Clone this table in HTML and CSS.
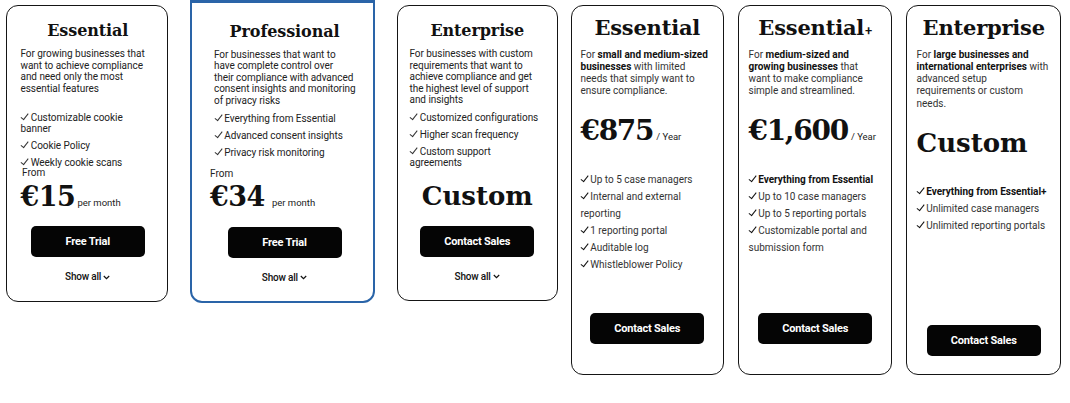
FILE: index.html
```html
<!DOCTYPE html>
<html lang="en">
<head>
<meta charset="utf-8">
<title>Pricing</title>
<link rel="stylesheet" href="styles.css">
</head>
<body>
<div class="page">
  <div class="group group-trial">
    <div class="card card-essential">
      <h2 class="title">Essential</h2>
      <p class="desc">For growing businesses that<br>want to achieve compliance<br>and need only the most<br>essential features</p>
      <ul class="features">
        <li>Customizable cookie<br>banner</li>
        <li>Cookie Policy</li>
        <li>Weekly cookie scans</li>
      </ul>
      <div class="from">From</div>
      <div class="price"><span class="amount">€15</span><span class="unit">per month</span></div>
      <a class="btn">Free Trial</a>
      <div class="show">Show all <svg width="7" height="5" viewBox="0 0 7 5"><path d="M0.8 1l2.7 2.7L6.2 1" fill="none" stroke="#111" stroke-width="1.2"/></svg></div>
    </div>
    <div class="card card-pro">
      <h2 class="title">Professional</h2>
      <p class="desc">For businesses that want to<br>have complete control over<br>their compliance with advanced<br>consent insights and monitoring<br>of privacy risks</p>
      <ul class="features">
        <li>Everything from Essential</li>
        <li>Advanced consent insights</li>
        <li>Privacy risk monitoring</li>
      </ul>
      <div class="from">From</div>
      <div class="price"><span class="amount">€34</span><span class="unit unit-wide">per month</span></div>
      <a class="btn">Free Trial</a>
      <div class="show">Show all <svg width="7" height="5" viewBox="0 0 7 5"><path d="M0.8 1l2.7 2.7L6.2 1" fill="none" stroke="#111" stroke-width="1.2"/></svg></div>
    </div>
    <div class="card card-ent">
      <h2 class="title">Enterprise</h2>
      <p class="desc">For businesses with custom<br>requirements that want to<br>achieve compliance and get<br>the highest level of support<br>and insights</p>
      <ul class="features">
        <li>Customized configurations</li>
        <li>Higher scan frequency</li>
        <li>Custom support<br>agreements</li>
      </ul>
      <div class="custom">Custom</div>
      <a class="btn">Contact Sales</a>
      <div class="show">Show all <svg width="7" height="5" viewBox="0 0 7 5"><path d="M0.8 1l2.7 2.7L6.2 1" fill="none" stroke="#111" stroke-width="1.2"/></svg></div>
    </div>
  </div>
  <div class="group group-sales">
    <div class="card wcard w1">
      <h2 class="wtitle">Essential</h2>
      <p class="wdesc">For <b>small and medium-sized<br>businesses</b> with limited<br>needs that simply want to<br>ensure compliance.</p>
      <div class="wprice"><span class="amount">€875</span><span class="unit">/ Year</span></div>
      <ul class="wfeatures">
        <li>Up to 5 case managers</li>
        <li>Internal and external<br>reporting</li>
        <li>1 reporting portal</li>
        <li>Auditable log</li>
        <li>Whistleblower Policy</li>
      </ul>
      <a class="btn">Contact Sales</a>
    </div>
    <div class="card wcard w2">
      <h2 class="wtitle">Essential<span class="plus">+</span></h2>
      <p class="wdesc">For <b>medium-sized and<br>growing businesses</b> that<br>want to make compliance<br>simple and streamlined.</p>
      <div class="wprice"><span class="amount">€1,600</span><span class="unit">/ Year</span></div>
      <ul class="wfeatures">
        <li class="strong">Everything from Essential</li>
        <li>Up to 10 case managers</li>
        <li>Up to 5 reporting portals</li>
        <li>Customizable portal and<br>submission form</li>
      </ul>
      <a class="btn">Contact Sales</a>
    </div>
    <div class="card wcard w3">
      <h2 class="wtitle">Enterprise</h2>
      <p class="wdesc">For <b>large businesses and<br>international enterprises</b> with<br>advanced setup<br>requirements or custom<br>needs.</p>
      <div class="wcustom">Custom</div>
      <ul class="wfeatures">
        <li class="strong">Everything from Essential+</li>
        <li>Unlimited case managers</li>
        <li>Unlimited reporting portals</li>
      </ul>
      <a class="btn">Contact Sales</a>
    </div>
  </div>
</div>
</body>
</html>
```
FILE: styles.css
```css
* { box-sizing: border-box; }
html, body { margin: 0; padding: 0; background: #fff; }
body {
  font-family: Roboto, "Noto Sans", sans-serif;
  color: #222;
  width: 1070px;
  height: 403px;
  overflow: hidden;
}
.page {
  display: flex;
  align-items: flex-start;
  gap: 13px;
  padding: 5px 0 0 6px;
}
.group { display: flex; }
.group-trial { gap: 22px; align-items: flex-start; }
.group-sales { gap: 14px; align-items: stretch; }

.card {
  display: flex;
  flex-direction: column;
  background: #fff;
  border: 1.5px solid #151515;
  border-radius: 12px;
}
.card-essential { width: 162px; padding: 15px 4px 17.5px 13.5px; }
.card-pro {
  width: 185px;
  margin-top: -5px;
  border: 2px solid #2a64a8;
  border-top-width: 3px;
  border-radius: 0 0 12px 12px;
  padding: 18.5px 4px 17px 18px;
}
.card-ent { width: 161px; padding: 15px 4px 17.5px 11.5px; }

.title {
  margin: 0;
  font-family: "DejaVu Serif", serif;
  font-weight: 700;
  font-size: 16px;
  line-height: 20px;
  text-align: center;
  color: #111;
  letter-spacing: -0.1px;
}
.card-essential .title, .card-ent .title { padding-right: 8px; }
.card-pro .title { padding-right: 10px; }
.desc {
  margin: 7px 0 0;
  font-size: 10px;
  line-height: 11.5px;
  min-height: 57.5px;
  letter-spacing: -0.05px;
}
.card-pro .desc, .card-pro .features { margin-left: 4px; }
.features {
  list-style: none;
  margin: 6.5px 0 0;
  padding: 0;
  height: 55px;
  font-size: 10px;
  line-height: 11px;
  letter-spacing: -0.05px;
}
.features li { margin-bottom: 6px; }
.features li::before,
.wfeatures li::before {
  content: "";
  display: inline-block;
  width: 3.2px;
  height: 7px;
  margin: 0 4.5px 0 1.5px;
  border-right: 1px solid #333;
  border-bottom: 1px solid #333;
  transform: rotate(38deg);
  transform-origin: 60% 60%;
  vertical-align: 1px;
}
.wfeatures li::before {
  margin-right: 4px;
  border-right: 1.4px solid #111;
  border-bottom: 1.4px solid #111;
}
.from {
  font-size: 10px;
  line-height: 11px;
  padding-left: 1.5px;
}
.card-pro .from { padding-left: 0; }
.price {
  margin-top: 3.5px;
  display: flex;
  align-items: baseline;
  height: 30px;
}
.amount {
  font-family: "DejaVu Serif", serif;
  font-weight: 700;
  font-size: 27px;
  line-height: 30px;
  color: #111;
  letter-spacing: -0.5px;
}
.unit {
  font-size: 9.5px;
  margin-left: 2px;
  color: #222;
}
.unit-wide { margin-left: 7px; }
.custom {
  margin-top: 14px;
  padding-right: 8px;
  font-family: "DejaVu Serif", serif;
  font-weight: 700;
  font-size: 26px;
  line-height: 30px;
  text-align: center;
  color: #111;
}
.btn {
  display: flex;
  align-items: center;
  justify-content: center;
  align-self: center;
  width: 114px;
  height: 31px;
  margin-top: 14.5px;
  background: #050505;
  color: #fff;
  border-radius: 5px;
  font-weight: 700;
  font-size: 11px;
  letter-spacing: -0.2px;
}
.card-essential .btn, .card-ent .btn { margin-right: 8px; }
.card-pro .btn { margin-right: 10px; }
.show {
  margin-top: 14px;
  text-align: center;
  font-size: 10px;
  line-height: 12px;
  font-weight: 500;
  color: #111;
  letter-spacing: -0.2px;
}
.card-essential .show, .card-ent .show { padding-right: 8px; }
.card-pro .show { padding-right: 10px; }
.show svg { vertical-align: middle; }

/* whistleblowing cards */
.wcard { padding: 9.5px 4px 17px 9.5px; height: 370px; }
.w1 { width: 153px; padding-left: 8.5px; }
.w2 { width: 154px; }
.w3 { width: 155px; }
.wtitle {
  margin: 0 5px 0 0;
  font-family: "DejaVu Serif", serif;
  font-weight: 700;
  font-size: 21px;
  line-height: 24px;
  text-align: center;
  color: #111;
  letter-spacing: -0.2px;
}
.plus {
  font-family: Roboto, sans-serif;
  font-size: 13px;
  font-weight: 500;
  line-height: 0;
  margin-left: 1px;
}
.wdesc {
  margin: 9px 0 0;
  font-size: 10px;
  line-height: 12.3px;
  color: #333;
}
.wdesc b { color: #111; font-weight: 700; }
.wprice {
  margin-top: 18px;
  display: flex;
  align-items: baseline;
  height: 30px;
}
.wprice .amount { font-size: 28px; letter-spacing: -1.3px; }
.wprice .unit { margin-left: 3px; }
.wcustom {
  margin-top: 18px;
  font-family: "DejaVu Serif", serif;
  font-weight: 700;
  font-size: 26px;
  line-height: 30px;
  color: #111;
}
.wfeatures {
  list-style: none;
  margin: 25px 0 0;
  padding: 0;
  height: 130px;
  font-size: 10px;
  line-height: 17px;
  color: #333;
}
.wfeatures .strong { color: #111; font-weight: 700; }
.wcard .btn { margin-top: 12.5px; margin-right: 5px; }
```
